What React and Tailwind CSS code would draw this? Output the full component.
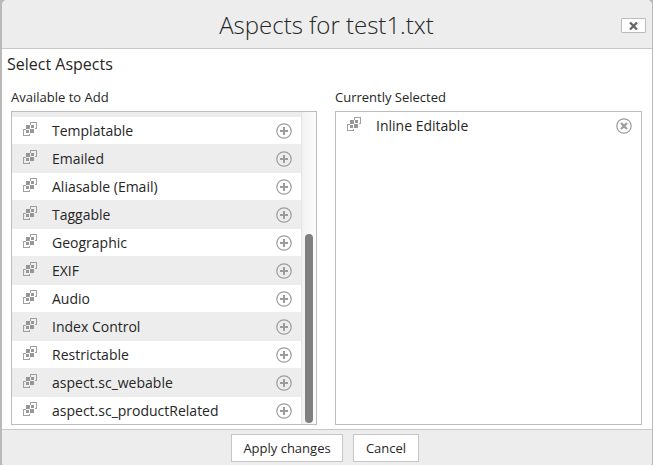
import React from "react";

const available = [
  "Templatable",
  "Emailed",
  "Aliasable (Email)",
  "Taggable",
  "Geographic",
  "EXIF",
  "Audio",
  "Index Control",
  "Restrictable",
  "aspect.sc_webable",
  "aspect.sc_productRelated",
];

function AspectIcon() {
  return (
    <svg width="14" height="14" viewBox="0 0 14 14" shapeRendering="crispEdges" className="shrink-0">
      <g fill="none" stroke="#a0a0a0">
        <path d="M7.5 2.5V.5H13.5V6.5H11.5" />
        <path d="M2.5 7.5H.5V13.5H6.5V11.5" />
      </g>
      <g fill="#969696">
        <path d="M3 3h4v4H3zM8 3h3v3H8zM3 8h3v3H3zM7 7h4v4H7z" />
      </g>
    </svg>
  );
}

function CircleIcon({ remove }) {
  return (
    <svg width="16" height="16" viewBox="0 0 16 16" fill="none" stroke="#9b9b9b" className="shrink-0">
      <circle cx="8" cy="8" r="7.2" strokeWidth="1.2" />
      {remove ? (
        <path d="M5 5l6 6M11 5l-6 6" strokeWidth="2.2" />
      ) : (
        <path d="M8 4v8M4 8h8" strokeWidth="2" />
      )}
    </svg>
  );
}

function AspectRow({ name, shaded, remove }) {
  return (
    <li
      className={`flex h-7 shrink-0 items-center border-b pl-[11px] pr-[9px] ${
        remove ? "border-transparent" : "border-[#ededed]"
      } ${shaded ? "bg-[#ededed]" : "bg-white"}`}
    >
      <span className="-mt-[3px]">
        <AspectIcon />
      </span>
      <span className="ml-[15px] flex-1 whitespace-nowrap text-[14px] leading-[27px]">{name}</span>
      <CircleIcon remove={remove} />
    </li>
  );
}

function FooterButton({ children, className }) {
  return (
    <button className={`h-7 border border-[#c5c5c5] bg-white text-[13px] leading-none whitespace-nowrap ${className}`}>
      {children}
    </button>
  );
}

export default function App() {
  return (
    <div className="h-[465px] w-[653px] overflow-hidden bg-[#b9b9b9] pl-[2px] pr-px font-['Open_Sans','Noto_Sans',sans-serif] text-[#262626]">
      <div className="flex h-full flex-col overflow-hidden rounded-[5px] rounded-b-[2px] bg-white">
        <header className="flex h-[49px] shrink-0 items-center border-b border-[#c8c8c8] bg-[#ededed]">
          <h1 className="ml-[30px] flex-1 pt-[2px] text-center text-[24px] font-light leading-[46px]">
            Aspects for test1.txt
          </h1>
          <button
            aria-label="Close"
            className="mr-[6px] mt-[3px] flex h-[15px] w-[25px] items-center justify-center rounded-[1px] border border-[#bcbcbc] bg-white"
          >
            <svg width="9" height="8" viewBox="0 0 9 8" stroke="#666" strokeWidth="2.3">
              <path d="M1 .5l7 7M8 .5l-7 7" />
            </svg>
          </button>
        </header>

        <main className="flex h-[380px] shrink-0 flex-col">
          <h2 className="h-[39px] pl-[5px] pt-[3px] text-[16px] leading-6">Select Aspects</h2>
          <div className="flex gap-[18px] pl-[9px]">
            <section className="w-[306px]">
              <h3 className="h-[23px] text-[13px] leading-[18px]">Available to Add</h3>
              <div className="flex h-[314px] overflow-hidden border border-[#bdbdbd]">
                <ul className="flex flex-1 flex-col overflow-hidden">
                  <li className="h-[5px] shrink-0 bg-[#ededed]" />
                  {available.map((name, i) => (
                    <AspectRow key={name} name={name} shaded={i % 2 === 1} />
                  ))}
                </ul>
                <div className="flex w-[15px] items-end border-l border-[#e6e6e6] bg-linear-to-r from-[#f1f1f1] to-[#fcfcfc] pb-px pl-[3px]">
                  <div className="h-[189px] w-[8px] rounded-full bg-[#7f7f7f]" />
                </div>
              </div>
            </section>
            <section className="w-[307px]">
              <h3 className="h-[23px] text-[13px] leading-[18px]">Currently Selected</h3>
              <ul className="h-[314px] border border-[#bdbdbd]">
                <AspectRow name="Inline Editable" remove />
              </ul>
            </section>
          </div>
        </main>

        <footer className="flex flex-1 justify-center gap-[10px] border-t border-[#c8c8c8] bg-[#ededed] pt-1 pr-1">
          <FooterButton className="w-[112px]">Apply changes</FooterButton>
          <FooterButton className="w-[66px]">Cancel</FooterButton>
        </footer>
      </div>
    </div>
  );
}
